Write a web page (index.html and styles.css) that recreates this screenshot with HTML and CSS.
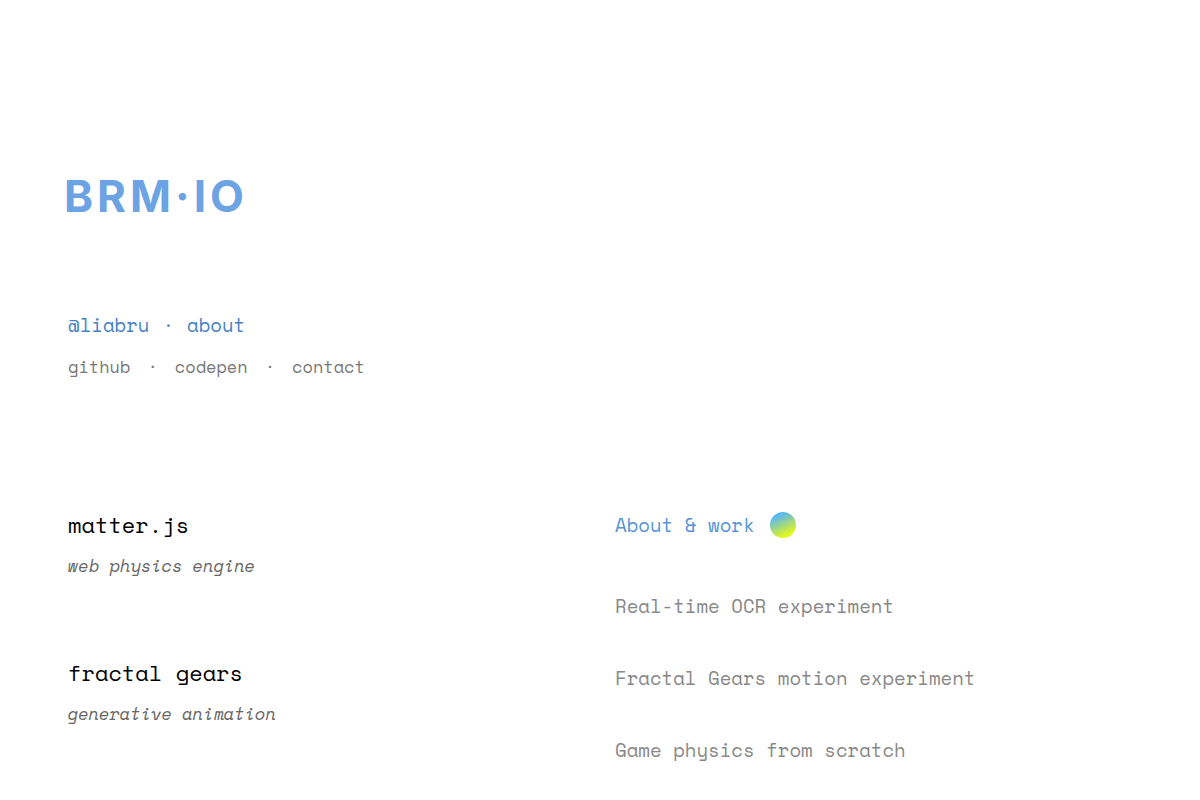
FILE: index.html
```html
<!DOCTYPE html>
<html lang="en">
<head>
<meta charset="utf-8">
<meta name="viewport" content="width=device-width, initial-scale=1">
<title>BRM·IO</title>
<link rel="stylesheet" href="styles.css">
</head>
<body>
<header class="header">
  <h1 class="logo"><a href="#">BRM·IO</a></h1>
  <nav class="nav nav-primary"><a href="#">@liabru</a><span class="dot">·</span><a href="#">about</a></nav>
  <nav class="nav nav-secondary"><a href="#">github</a><span class="dot">·</span><a href="#">codepen</a><span class="dot">·</span><a href="#">contact</a></nav>
</header>
<main class="content">
  <section class="projects">
    <article class="project">
      <h2 class="project-title"><a href="#">matter.js</a></h2>
      <p class="project-note">web physics engine</p>
    </article>
    <article class="project">
      <h2 class="project-title"><a href="#">fractal gears</a></h2>
      <p class="project-note">generative animation</p>
    </article>
  </section>
  <section class="posts">
    <a class="post post-about" href="#">About &amp; work<span class="ball"></span></a>
    <a class="post" href="#">Real-time OCR experiment</a>
    <a class="post" href="#">Fractal Gears motion experiment</a>
    <a class="post" href="#">Game physics from scratch</a>
  </section>
</main>
</body>
</html>
```
FILE: styles.css
```css
* { box-sizing: border-box; }
body {
  margin: 0;
  padding: 160px 68px 0;
  background: #fff;
  font-family: "Space Mono", "Liberation Mono", monospace;
}
a { color: inherit; text-decoration: none; }
h1, h2, p { margin: 0; font-weight: 400; }
.logo {
  margin-left: -4px;
  font: 700 44px/72px Inter, sans-serif;
  letter-spacing: 4px;
  color: #6ba3e3;
}
.nav { display: flex; }
.nav-primary {
  margin-top: 77px;
  gap: 13px;
  font-size: 19px;
  line-height: 32px;
  color: #4682c4;
}
.nav-secondary {
  margin-top: 12px;
  gap: 17px;
  font-size: 17px;
  line-height: 28px;
  color: #777;
}
.content {
  display: grid;
  grid-template-columns: 1fr 1fr;
  gap: 30px;
  margin-top: 126px;
}
.project { margin-bottom: 73px; }
.project:last-child { margin-bottom: 0; }
.project-title { font-size: 22px; line-height: 36px; color: #000; }
.project-note {
  margin-top: 7px;
  font-size: 17px;
  font-style: italic;
  line-height: 32px;
  color: #666;
}
.posts {
  display: flex;
  flex-direction: column;
  align-items: flex-start;
  gap: 36px;
}
.post { font-size: 19px; line-height: 36px; color: #888; }
.post-about {
  display: flex;
  align-items: center;
  gap: 15px;
  margin-bottom: 9px;
  color: #5594d6;
}
.ball {
  width: 26px;
  height: 26px;
  border-radius: 50%;
  background: linear-gradient(155deg, #5cb8f0 20%, #e0f61c 80%);
}
```
